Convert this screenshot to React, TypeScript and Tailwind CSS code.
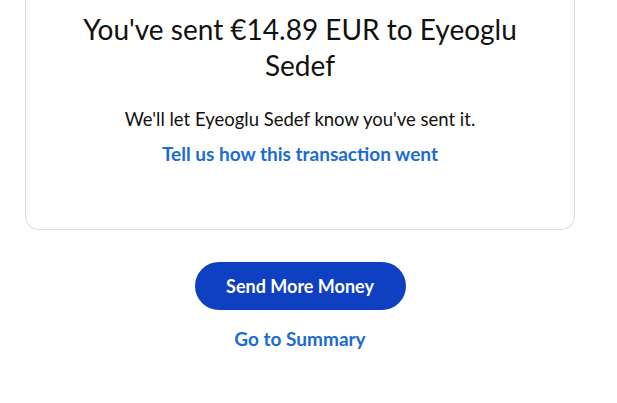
export default function App() {
  return (
    <div className="min-h-screen bg-white font-['Lato','Open_Sans',sans-serif] text-[#111]">
      <div className="ml-[25px] flex w-[550px] flex-col items-center">
        {/* Confirmation card, its top edge scrolled off screen */}
        <div className="flex w-full flex-col items-center rounded-b-[14px] border-x border-b border-[#dcdcdc] pt-[11px] pb-[62px]">
          <h1 className="w-[470px] text-center text-[28px] leading-[36px] font-normal">
            You've sent €14.89 EUR to Eyeoglu Sedef
          </h1>
          <p className="mt-[23px] text-[18.5px] leading-[26px]">
            We'll let Eyeoglu Sedef know you've sent it.
          </p>
          <a href="#" className="mt-[9px] text-[19px] leading-[26px] font-bold text-[#1c6bd0]">
            Tell us how this transaction went
          </a>
        </div>
        <button className="mt-[32px] h-[48px] w-[211px] rounded-full bg-[#0f40c2] text-[18px] font-bold text-white">
          Send More Money
        </button>
        <a href="#" className="mt-[16px] text-[19px] leading-[26px] font-bold text-[#1c6bd0]">
          Go to Summary
        </a>
      </div>
    </div>
  )
}
